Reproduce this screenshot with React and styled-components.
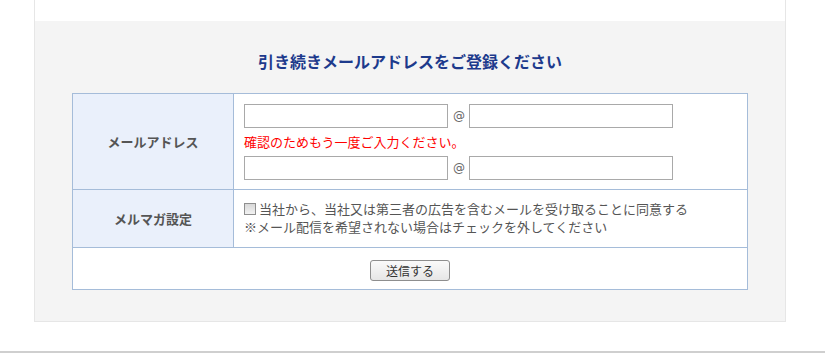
import React from 'react';
import styled, { createGlobalStyle } from 'styled-components';

const GlobalStyle = createGlobalStyle`
  html, body {
    margin: 0;
    padding: 0;
    background: #fff;
    font-family: "Noto Sans CJK JP", "Noto Sans", sans-serif;
    color: #555;
  }
`;

const Frame = styled.div`
  width: 750px;
  margin-left: 34px;
  border-left: 1px solid #e6e6e6;
  border-right: 1px solid #e6e6e6;
`;

const TopSpace = styled.div`
  height: 21px;
  background: #fff;
`;

const Panel = styled.section`
  background: #f4f4f4;
  border-bottom: 1px solid #e6e6e6;
  padding: 29px 37px 31px;
`;

const Title = styled.h2`
  margin: 0 0 21px;
  font-size: 16px;
  line-height: 22px;
  font-weight: bold;
  color: #1d3a8c;
  text-align: center;
`;

const Table = styled.table`
  width: 100%;
  border-collapse: collapse;
  background: #fff;
  border: 1px solid #a5bcd9;
`;

const Label = styled.th`
  width: 160px;
  background: #eaf0fb;
  border: 1px solid #a5bcd9;
  font-size: 13px;
  font-weight: bold;
  color: #555;
  text-align: center;
  vertical-align: middle;
  padding: 0;
`;

const Cell = styled.td`
  border: 1px solid #a5bcd9;
  padding: ${(p) => p.$pad || '10px'};
  height: ${(p) => p.$h}px;
  box-sizing: border-box;
  vertical-align: middle;
  text-align: ${(p) => (p.$center ? 'center' : 'left')};
`;

const InputRow = styled.div`
  display: flex;
  align-items: center;
`;

const TextInput = styled.input`
  width: 204px;
  height: 24px;
  box-sizing: border-box;
  border: 1px solid #a9a9a9;
  background: #fff;
  margin: 0;
  padding: 2px 4px;
  font-size: 13px;
`;

const At = styled.span`
  font-family: "DejaVu Sans", sans-serif;
  font-size: 12px;
  color: #666;
  margin: 0 4px 0 5px;
`;

const Note = styled.div`
  color: #f00;
  font-size: 13px;
  line-height: 28px;
`;

const Line = styled.div`
  display: flex;
  align-items: center;
  font-size: 13px;
  line-height: 18px;
  color: #555;
`;

const Check = styled.input`
  appearance: none;
  width: 12px;
  height: 12px;
  margin: 0 3px 0 0;
  border: 1px solid #8f8f8f;
  background: linear-gradient(#d8d8d8, #f2f2f2);
  box-sizing: border-box;
`;

const Button = styled.button`
  width: 80px;
  height: 21px;
  border: 1px solid #8e8e8e;
  border-radius: 3px;
  background: linear-gradient(#fafafa, #e6e6e6);
  font-family: inherit;
  font-size: 12px;
  line-height: 17px;
  color: #333;
  padding: 0;
`;

const Footer = styled.div`
  margin-top: 29px;
  border-top: 2px solid #cfcfcf;
`;

export default function App() {
  return (
    <>
      <GlobalStyle />
      <Frame>
        <TopSpace />
        <Panel>
          <Title>引き続きメールアドレスをご登録ください</Title>
          <Table>
            <tbody>
              <tr>
                <Label>メールアドレス</Label>
                <Cell $h={96} $pad="10px 10px 9px">
                  <InputRow>
                    <TextInput type="text" />
                    <At>@</At>
                    <TextInput type="text" />
                  </InputRow>
                  <Note>確認のためもう一度ご入力ください。</Note>
                  <InputRow>
                    <TextInput type="text" />
                    <At>@</At>
                    <TextInput type="text" />
                  </InputRow>
                </Cell>
              </tr>
              <tr>
                <Label>メルマガ設定</Label>
                <Cell $h={58} $pad="9px 10px 10px">
                  <Line>
                    <Check type="checkbox" />
                    当社から、当社又は第三者の広告を含むメールを受け取ることに同意する
                  </Line>
                  <Line>※メール配信を希望されない場合はチェックを外してください</Line>
                </Cell>
              </tr>
              <tr>
                <Cell colSpan={2} $h={42} $pad="8px 10px" $center>
                  <Button type="button">送信する</Button>
                </Cell>
              </tr>
            </tbody>
          </Table>
        </Panel>
      </Frame>
      <Footer />
    </>
  );
}
